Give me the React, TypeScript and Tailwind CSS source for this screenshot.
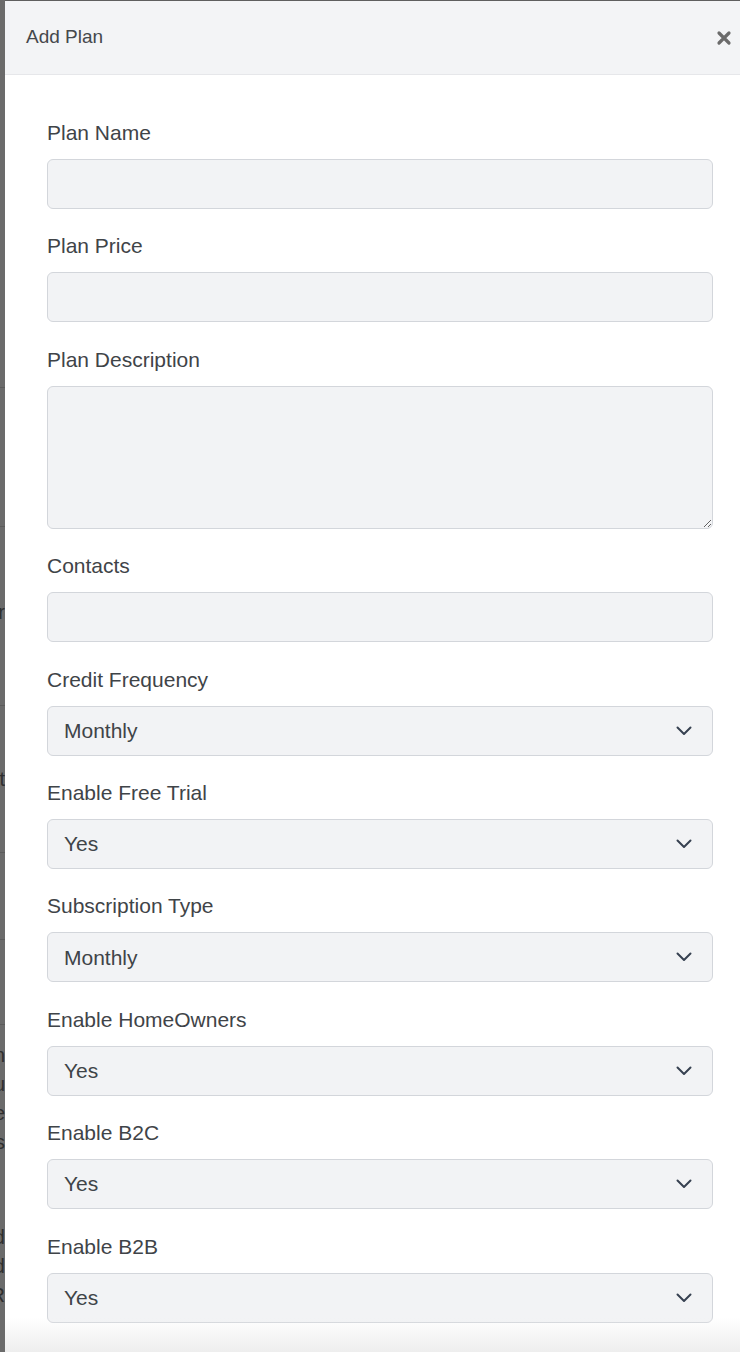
import React from 'react';

const font = { fontFamily: '"Liberation Sans", Arial, Helvetica, sans-serif' };

const Chevron = () => (
  <svg width="16" height="10" viewBox="0 0 16 10" fill="none" className="pointer-events-none absolute right-[21px] top-1/2 -translate-y-1/2">
    <path d="M1.5 1.5 8 8l6.5-6.5" stroke="#374151" strokeWidth="2" strokeLinecap="round" strokeLinejoin="round" />
  </svg>
);

const Label: React.FC<{ children: React.ReactNode }> = ({ children }) => (
  <label className="block h-[28px] leading-[28px] text-[21px] text-[#3f4448]">{children}</label>
);

const inputCls = 'block w-full rounded-[6px] border border-[#d3d6db] bg-[#f2f3f5] px-[16px] text-[21px] text-[#3f4448] outline-none';

const TextField: React.FC<{ label: string }> = ({ label }) => (
  <div className="flex flex-col gap-[12px]">
    <Label>{label}</Label>
    <input className={`${inputCls} h-[50px]`} style={font} />
  </div>
);

const SelectField: React.FC<{ label: string; value: string; options: string[] }> = ({ label, value, options }) => (
  <div className="flex flex-col gap-[12px]">
    <Label>{label}</Label>
    <div className="relative">
      <select defaultValue={value} className={`${inputCls} h-[50px] appearance-none`} style={font}>
        {options.map(o => <option key={o}>{o}</option>)}
      </select>
      <Chevron />
    </div>
  </div>
);

// right-aligned word whose end peeks out from under the panel
const Peek: React.FC<{ text: string }> = ({ text }) => (
  <div className="flex h-[29px] justify-end whitespace-nowrap leading-[29px]">{text}</div>
);

const App: React.FC = () => {
  const yesNo = ['Yes', 'No'];
  const freq = ['Monthly', 'Yearly'];
  return (
    <div className="flex h-[1352px] w-[740px] overflow-hidden bg-[#6b6b6b]" style={font}>
      {/* background page peeking through on the left */}
      <div className="flex w-[5px] shrink-0 flex-col overflow-hidden text-[20px] text-[#2f2f2f]">
        <div className="h-[388px] shrink-0 border-b border-[#5c5c5c]" />
        <div className="h-[139px] shrink-0 border-b border-[#5c5c5c]" />
        <div className="flex h-[179px] shrink-0 flex-col justify-center border-b border-[#5c5c5c] pb-[8px]"><Peek text="Number" /></div>
        <div className="flex h-[147px] shrink-0 flex-col justify-center border-b border-[#5c5c5c]"><Peek text="List" /></div>
        <div className="h-[87px] shrink-0 border-b border-[#5c5c5c]" />
        <div className="h-[85px] shrink-0 border-b border-[#5c5c5c]" />
        <div className="flex flex-col pt-[16px]">
          <Peek text="Plan" />
          <Peek text="Menu" />
          <Peek text="Type" />
          <Peek text="This" />
          <div className="h-[66px]" />
          <Peek text="Add" />
          <Peek text="Field" />
          <Peek text="OR" />
        </div>
      </div>

      <div className="relative flex flex-1 flex-col border-t border-[#5f5f5f] bg-white">
        <div className="flex h-[74px] shrink-0 items-center justify-between border-b border-[#e6e7ea] bg-[#f3f4f6] pl-[21px] pr-[8px]">
          <h2 className="text-[19px] text-[#45484c]">Add Plan</h2>
          <svg width="16" height="16" viewBox="0 0 16 16" className="mt-[1px]">
            <path d="M3 3l10 10M13 3 3 13" stroke="#6b6b6b" strokeWidth="3.2" strokeLinecap="round" />
          </svg>
        </div>

        <div className="flex flex-col gap-[23.4px] pl-[42px] pr-[27px] pt-[44px]">
          <TextField label="Plan Name" />
          <TextField label="Plan Price" />
          <div className="flex flex-col gap-[12px]">
            <Label>Plan Description</Label>
            <textarea className={`${inputCls} h-[143px] py-[10px]`} style={font} />
          </div>
          <TextField label="Contacts" />
          <SelectField label="Credit Frequency" value="Monthly" options={freq} />
          <SelectField label="Enable Free Trial" value="Yes" options={yesNo} />
          <SelectField label="Subscription Type" value="Monthly" options={freq} />
          <SelectField label="Enable HomeOwners" value="Yes" options={yesNo} />
          <SelectField label="Enable B2C" value="Yes" options={yesNo} />
          <SelectField label="Enable B2B" value="Yes" options={yesNo} />
          <SelectField label="Enable Landlords" value="Yes" options={yesNo} />
        </div>

        <div className="pointer-events-none absolute bottom-0 left-0 right-0 h-[34px] bg-gradient-to-b from-white/0 to-[#eeeeee]" />
      </div>
    </div>
  );
};

export default App;
